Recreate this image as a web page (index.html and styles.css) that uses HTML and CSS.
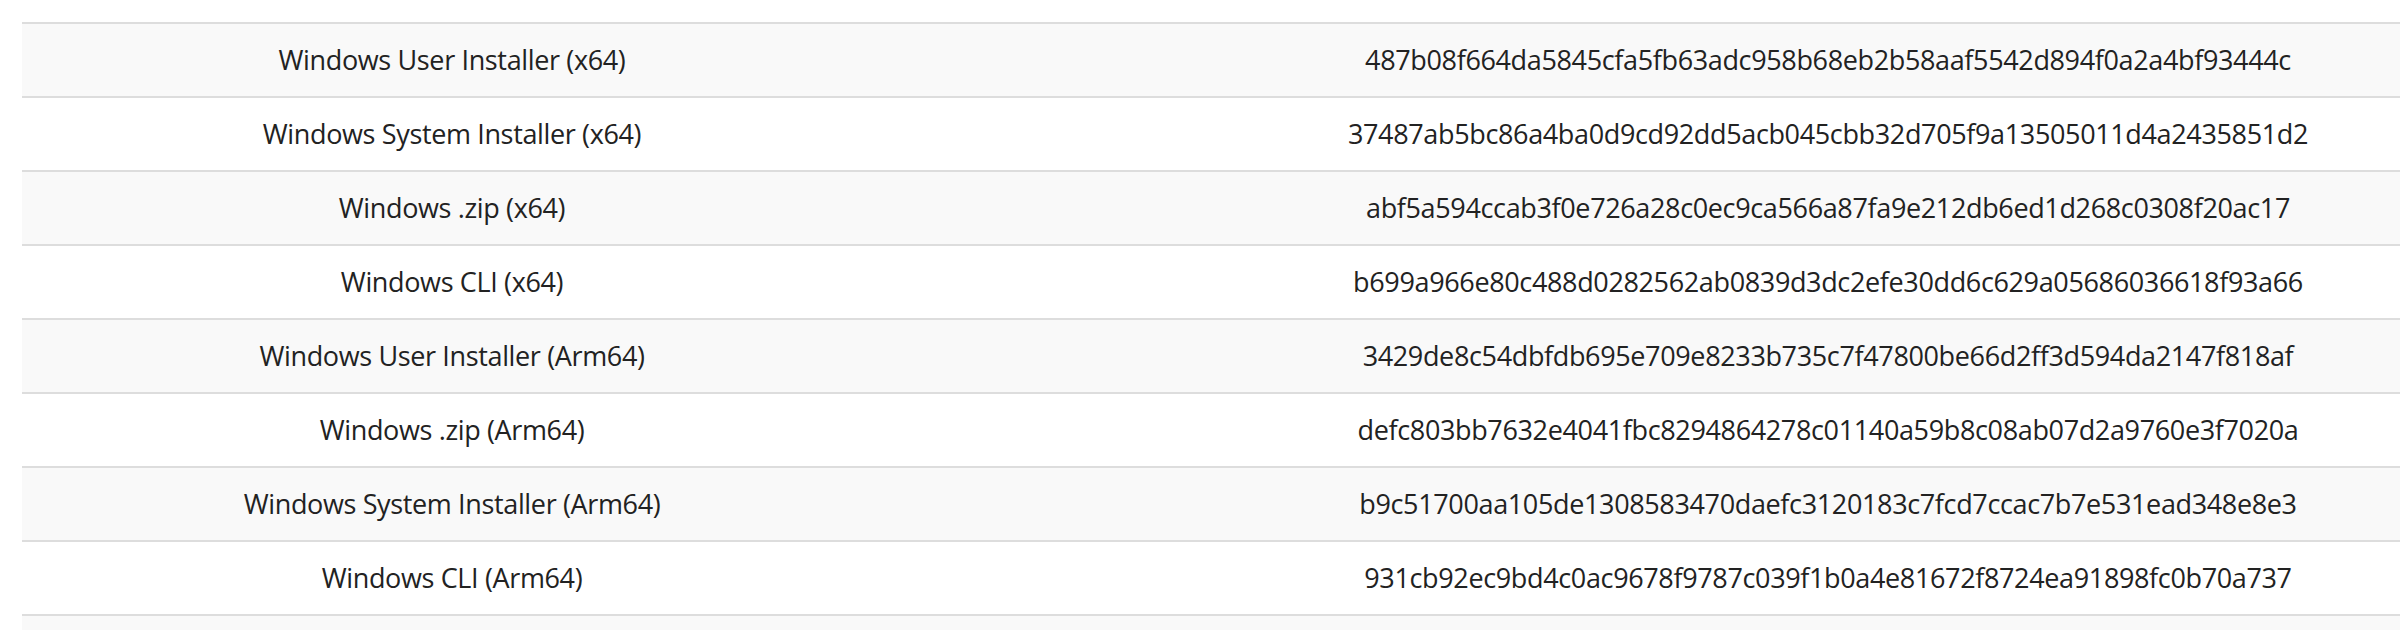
FILE: index.html
```html
<!DOCTYPE html>
<html lang="en">
<head>
<meta charset="utf-8">
<title>Checksums</title>
<link rel="stylesheet" href="styles.css">
</head>
<body>
<div class="page">
  <table class="checksums">
    <colgroup>
      <col class="col-name">
      <col class="col-hash">
    </colgroup>
    <tbody>
      <tr><td>Windows User Installer (x64)</td><td>487b08f664da5845cfa5fb63adc958b68eb2b58aaf5542d894f0a2a4bf93444c</td></tr>
      <tr><td>Windows System Installer (x64)</td><td>37487ab5bc86a4ba0d9cd92dd5acb045cbb32d705f9a13505011d4a2435851d2</td></tr>
      <tr><td>Windows .zip (x64)</td><td>abf5a594ccab3f0e726a28c0ec9ca566a87fa9e212db6ed1d268c0308f20ac17</td></tr>
      <tr><td>Windows CLI (x64)</td><td>b699a966e80c488d0282562ab0839d3dc2efe30dd6c629a05686036618f93a66</td></tr>
      <tr><td>Windows User Installer (Arm64)</td><td>3429de8c54dbfdb695e709e8233b735c7f47800be66d2ff3d594da2147f818af</td></tr>
      <tr><td>Windows .zip (Arm64)</td><td>defc803bb7632e4041fbc8294864278c01140a59b8c08ab07d2a9760e3f7020a</td></tr>
      <tr><td>Windows System Installer (Arm64)</td><td>b9c51700aa105de1308583470daefc3120183c7fcd7ccac7b7e531ead348e8e3</td></tr>
      <tr><td>Windows CLI (Arm64)</td><td>931cb92ec9bd4c0ac9678f9787c039f1b0a4e81672f8724ea91898fc0b70a737</td></tr>
      <tr><td>&nbsp;</td><td>&nbsp;</td></tr>
    </tbody>
  </table>
</div>
</body>
</html>
```

FILE: styles.css
```css
html, body {
  margin: 0;
  padding: 0;
  background: #ffffff;
}

.page {
  width: 2400px;
  height: 630px;
  overflow: hidden;
  padding: 22px 0 0 22px;
  box-sizing: border-box;
}

.checksums {
  width: 2752px;
  border-collapse: collapse;
  table-layout: fixed;
  font-family: "Open Sans", "Noto Sans", sans-serif;
  font-size: 27px;
  letter-spacing: -0.36px;
  line-height: 42px;
  color: #222222;
}

.col-name { width: 860px; }
.col-hash { width: 1892px; }

.checksums td {
  border-top: 2px solid #dddddd;
  padding: 15px 0;
  text-align: center;
  white-space: nowrap;
}

.checksums tr:nth-child(odd) td {
  background: #f9f9f9;
}
```
